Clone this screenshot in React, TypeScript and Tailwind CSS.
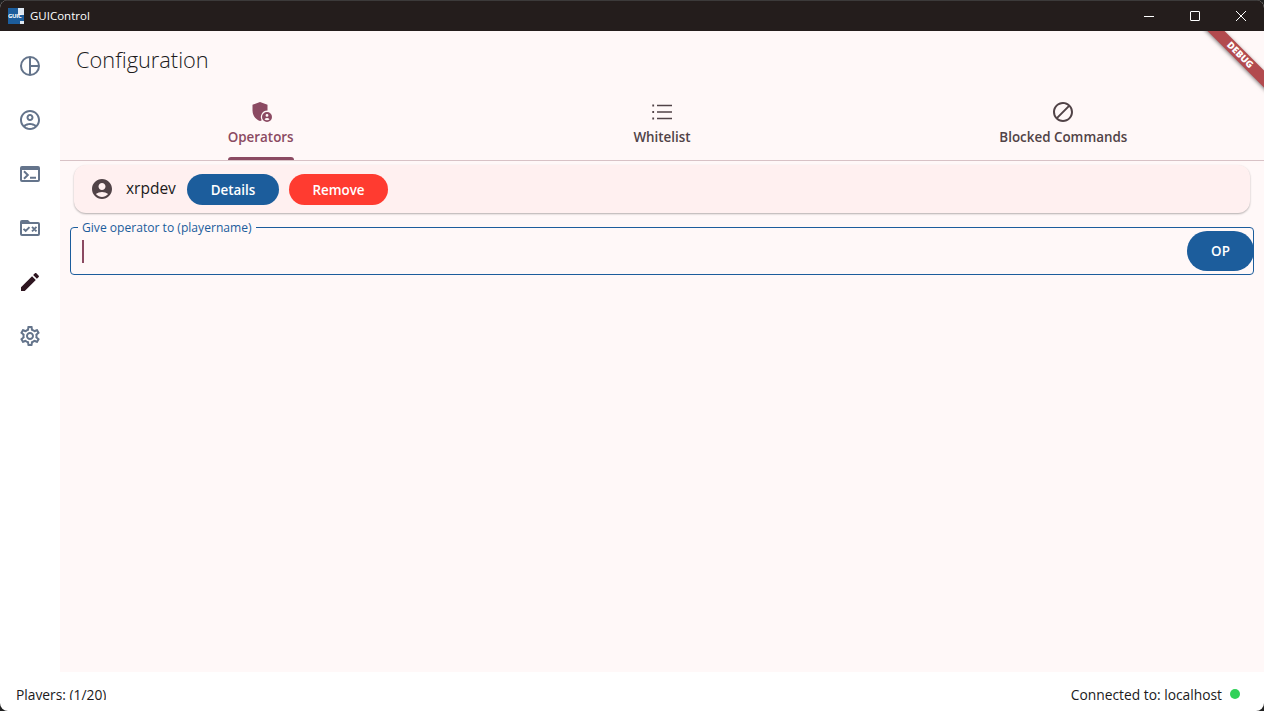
import { ReactNode } from "react";

const accountPath =
  "M12 2C6.48 2 2 6.48 2 12s4.48 10 10 10 10-4.48 10-10S17.52 2 12 2zm0 4c1.93 0 3.5 1.57 3.5 3.5S13.93 13 12 13s-3.5-1.57-3.5-3.5S10.07 6 12 6zm0 14c-2.03 0-4.43-.82-6.14-2.88C7.55 15.8 9.68 15 12 15s4.45.8 6.14 2.12C16.43 19.18 14.03 20 12 20z";

const gearPath =
  "M19.43 12.98c.04-.32.07-.64.07-.98 0-.34-.03-.66-.07-.98l2.11-1.65c.19-.15.24-.42.12-.64l-2-3.46c-.09-.16-.26-.25-.44-.25-.06 0-.12.01-.17.03l-2.49 1c-.52-.4-1.08-.73-1.69-.98l-.38-2.65C14.46 2.18 14.25 2 14 2h-4c-.25 0-.46.18-.49.42l-.38 2.65c-.61.25-1.17.59-1.69.98l-2.49-1c-.06-.02-.12-.03-.18-.03-.17 0-.34.09-.43.25l-2 3.46c-.13.22-.07.49.12.64l2.11 1.65c-.04.32-.07.65-.07.98 0 .33.03.66.07.98l-2.11 1.65c-.19.15-.24.42-.12.64l2 3.46c.09.16.26.25.44.25.06 0 .12-.01.17-.03l2.49-1c.52.4 1.08.73 1.69.98l.38 2.65c.03.24.24.42.49.42h4c.25 0 .46-.18.49-.42l.38-2.65c.61-.25 1.17-.59 1.69-.98l2.49 1c.06.02.12.03.18.03.17 0 .34-.09.43-.25l2-3.46c.12-.22.07-.49-.12-.64l-2.11-1.65zm-1.98-1.71c.04.31.05.52.05.73 0 .21-.02.43-.05.73l-.14 1.13.89.7 1.08.84-.7 1.21-1.27-.51-1.04-.42-.9.68c-.43.32-.84.56-1.25.73l-1.06.43-.16 1.13-.2 1.35h-1.4l-.19-1.35-.16-1.13-1.06-.43c-.43-.18-.83-.41-1.23-.71l-.91-.7-1.06.43-1.27.51-.7-1.21 1.08-.84.89-.7-.14-1.13c-.03-.31-.05-.54-.05-.74s.02-.43.05-.73l.14-1.13-.89-.7-1.08-.84.7-1.21 1.27.51 1.04.42.9-.68c.43-.32.84-.56 1.25-.73l1.06-.43.16-1.13.2-1.35h1.39l.19 1.35.16 1.13 1.06.43c.43.18.83.41 1.23.71l.91.7 1.06-.43 1.27-.51.7 1.21-1.07.85-.89.7.14 1.13zM12 8c-2.21 0-4 1.79-4 4s1.79 4 4 4 4-1.79 4-4-1.79-4-4-4zm0 6c-1.1 0-2-.9-2-2s.9-2 2-2 2 .9 2 2-.9 2-2 2z";

function Icon({ className, children }: { className?: string; children: ReactNode }) {
  return (
    <svg viewBox="0 0 24 24" className={`h-6 w-6 ${className ?? ""}`} fill="currentColor">
      {children}
    </svg>
  );
}

const sidebarIcons = [
  {
    key: "dashboard",
    color: "text-[#64748b]",
    icon: (
      <g fill="none" stroke="currentColor" strokeWidth="2">
        <circle cx="12" cy="12" r="9" />
        <path d="M12 3v18M12 12h9" />
      </g>
    ),
  },
  {
    key: "players",
    color: "text-[#64748b]",
    icon: (
      <path d="M12 2C6.48 2 2 6.48 2 12s4.48 10 10 10 10-4.48 10-10S17.52 2 12 2zM7.35 18.5C8.66 17.56 10.26 17 12 17s3.34.56 4.65 1.5C15.34 19.44 13.74 20 12 20s-3.34-.56-4.65-1.5zm10.79-1.38C16.45 15.8 14.32 15 12 15s-4.45.8-6.14 2.12C4.7 15.73 4 13.95 4 12c0-4.42 3.58-8 8-8s8 3.58 8 8c0 1.95-.7 3.73-1.86 5.12zM12 6c-1.93 0-3.5 1.57-3.5 3.5S10.07 13 12 13s3.5-1.57 3.5-3.5S13.93 6 12 6zm0 5c-.83 0-1.5-.67-1.5-1.5S11.17 8 12 8s1.5.67 1.5 1.5S12.83 11 12 11z" />
    ),
  },
  {
    key: "console",
    color: "text-[#64748b]",
    icon: (
      <>
        <path
          fillRule="evenodd"
          d="M4 4h16a2 2 0 0 1 2 2v12a2 2 0 0 1-2 2H4a2 2 0 0 1-2-2V6a2 2 0 0 1 2-2zm0 4v10h16V8H4z"
        />
        <path d="M12 14.800h6v2h-6z" />
        <path d="M6 9.200l3.800 3.800L6 16.800" fill="none" stroke="currentColor" strokeWidth="2" />
      </>
    ),
  },
  {
    key: "files",
    color: "text-[#64748b]",
    icon: (
      <>
        <path
          fillRule="evenodd"
          d="M4 4h6l2 2h8a2 2 0 0 1 2 2v10a2 2 0 0 1-2 2H4a2 2 0 0 1-2-2V6a2 2 0 0 1 2-2zm0 4v10h16V8H4z"
        />
        <path
          d="M5.500 12.800l2.200 2.200 3.800-3.800M14 10.800l4.500 4.500M18.500 10.800L14 15.300"
          fill="none"
          stroke="currentColor"
          strokeWidth="1.900"
        />
      </>
    ),
  },
  {
    key: "config",
    color: "text-[#2e1520]",
    icon: (
      <path d="M3 17.25V21h3.75L17.81 9.94l-3.75-3.75L3 17.25zM20.71 7.04c.39-.39.39-1.02 0-1.41l-2.34-2.34c-.39-.39-1.02-.39-1.41 0l-1.83 1.83 3.75 3.75 1.83-1.83z" />
    ),
  },
  { key: "settings", color: "text-[#64748b]", icon: <path d={gearPath} /> },
];

const tabs = [
  {
    label: "Operators",
    active: true,
    icon: (
      <>
        <path d="M11 2 3.500 4.800v5.700c0 4.700 3.100 9.100 7.500 10.500.6-.2 1.200-.4 1.700-.7A6.500 6.500 0 0 1 18.500 10.600V4.800z" />
        <path
          fillRule="evenodd"
          d="M18 12a5 5 0 1 1 0 10 5 5 0 0 1 0-10zm0 2a1.400 1.400 0 1 0 0 2.800 1.400 1.400 0 0 0 0-2.800zm-2.500 5.200c.6.700 1.500 1.100 2.500 1.100s1.900-.4 2.500-1.100c-.6-.8-1.500-1.200-2.500-1.200s-1.900.4-2.500 1.200z"
        />
      </>
    ),
  },
  {
    label: "Whitelist",
    active: false,
    icon: (
      <path d="M7 4.800h15v1.400H7zM7 11.300h15v1.400H7zM7 17.800h15v1.400H7zM2.300 4.600h1.800v1.800H2.300zM2.300 11.100h1.800v1.800H2.300zM2.300 17.600h1.800v1.800H2.300z" />
    ),
  },
  {
    label: "Blocked Commands",
    active: false,
    icon: (
      <path d="M12 2C6.480 2 2 6.480 2 12s4.480 10 10 10 10-4.480 10-10S17.520 2 12 2zM4 12c0-4.420 3.580-8 8-8 1.850 0 3.550.63 4.900 1.690L5.690 16.900A7.902 7.902 0 0 1 4 12zm8 8c-1.850 0-3.550-.63-4.900-1.690L18.310 7.100A7.902 7.902 0 0 1 20 12c0 4.420-3.580 8-8 8z" />
    ),
  },
];

function AppLogo() {
  return (
    <div className="relative h-4 w-4 overflow-hidden bg-[#1c5d9c]">
      <div className="absolute right-0 top-0 h-[7px] w-[6px] bg-[#dfe8f2]" />
      <div className="absolute bottom-0 right-0 h-[3px] w-[4px] bg-[#dfe8f2]" />
      <span className="absolute left-0 top-[5px] text-[6px] font-bold leading-[7px] tracking-[-0.3px] text-white">GUIC</span>
    </div>
  );
}

function TitleBar() {
  return (
    <div className="flex h-[31px] shrink-0 items-center justify-between border-t border-[#3c3a3a] bg-[#241d1c] text-white">
      <div className="flex items-center gap-[6px] pl-2">
        <AppLogo />
        <span className="text-[11.5px]">GUIControl</span>
      </div>
      <div className="flex items-center">
        <div className="flex h-[30px] w-[46px] items-center justify-center">
          <div className="h-px w-[10px] bg-white" />
        </div>
        <div className="flex h-[30px] w-[46px] items-center justify-center">
          <div className="h-[10px] w-[10px] rounded-[1px] border border-white" />
        </div>
        <div className="flex h-[30px] w-[46px] items-center justify-center">
          <svg viewBox="0 0 10 10" className="h-[10px] w-[10px]" stroke="white" strokeWidth="1">
            <path d="M0 0l10 10M10 0L0 10" />
          </svg>
        </div>
      </div>
    </div>
  );
}

function Sidebar() {
  return (
    <nav className="flex w-[60px] shrink-0 flex-col items-center gap-[30px] bg-white pt-[23px]">
      {sidebarIcons.map((item) => (
        <Icon key={item.key} className={item.color}>
          {item.icon}
        </Icon>
      ))}
    </nav>
  );
}

function TabBar() {
  return (
    <div className="mt-[17px] grid h-[69px] grid-cols-3 border-b border-[#d8c2c6]">
      {tabs.map((tab) => (
        <div
          key={tab.label}
          className={`flex flex-col items-center pt-[8px] ${tab.active ? "text-[#8b4a62]" : "text-[#514347]"}`}
        >
          <div className="flex h-full flex-col items-center">
            <Icon>{tab.icon}</Icon>
            <span className="mt-[4px] text-[13.4px] font-semibold leading-[18px]">{tab.label}</span>
            {tab.active && <div className="mt-auto h-[3px] w-full rounded-t-[3px] bg-[#8b4a62]" />}
          </div>
        </div>
      ))}
    </div>
  );
}

function OperatorRow() {
  return (
    <div className="mx-[14px] mt-[4px] flex h-[48px] items-center rounded-xl bg-[#fff0f0] pl-4 shadow-[0_1px_2px_rgba(0,0,0,0.3)]">
      <Icon className="text-[#514347]">
        <path d={accountPath} />
      </Icon>
      <span className="ml-3 w-[51px] text-[15.5px] text-[#201a1b]">xrpdev</span>
      <button className="ml-[10px] h-[31px] w-[92px] rounded-full bg-[#1c5d9c] pt-[2px] text-[13.400px] font-semibold text-white">
        Details
      </button>
      <button className="ml-[10px] h-[31px] w-[99px] rounded-full bg-[#ff3b30] pt-[2px] text-[13.400px] font-semibold text-white">
        Remove
      </button>
    </div>
  );
}

function OperatorInput() {
  return (
    <div className="relative mx-[10px] mt-[14px] flex h-[48px] items-center justify-between rounded border border-[#1c5d9c] pl-[11px]">
      <span className="absolute -top-[8px] left-[7px] h-[14px] bg-[#fff8f8] px-[4px] text-[12.1px] leading-[16px] text-[#1c5d9c]">
        Give operator to (playername)
      </span>
      <div className="h-[23px] w-[2px] bg-[#8b4a62]" />
      <button className="-mr-px h-[40px] w-[67px] rounded-full bg-[#1c5d9c] text-[13.400px] font-semibold text-white">
        OP
      </button>
    </div>
  );
}

function DebugBanner() {
  return (
    <div className="pointer-events-none absolute right-0 top-0 h-[64px] w-[64px] overflow-hidden">
      <div className="absolute -right-[21px] top-[18px] flex h-[12px] w-[90px] rotate-45 items-center justify-center bg-[#b24a4e] text-[9.500px] font-extrabold leading-none text-white shadow-[0_1px_4px_rgba(0,0,0,0.5)]">
        DEBUG
      </div>
    </div>
  );
}

export default function App() {
  return (
    <div className="h-[711px] w-[1264px] bg-[#202020]">
      <div className="flex h-full flex-col overflow-hidden rounded-lg bg-white font-['Open_Sans','Noto_Sans',sans-serif]">
        <TitleBar />
        <div className="flex min-h-0 flex-1">
          <Sidebar />
          <main className="relative flex-1 bg-[#fff8f8]">
            <h1 className="pl-4 pt-[14px] text-[21.800px] font-light leading-[30px] text-[#201a1b]">Configuration</h1>
            <TabBar />
            <OperatorRow />
            <OperatorInput />
            <DebugBanner />
          </main>
        </div>
        <footer className="flex h-[39px] shrink-0 justify-between pl-4 pr-[24px] pt-[12px] text-[13.800px] text-[#201a1b]">
          <div className="h-[16px] overflow-hidden leading-[22px]">Players: (1/20)</div>
          <div className="flex h-[16px] items-start gap-[8px] overflow-hidden leading-[22px]">
            <span>Connected to: localhost</span>
            <div className="mt-[5px] h-[10px] w-[10px] rounded-full bg-[#30d158]" />
          </div>
        </footer>
      </div>
    </div>
  );
}
